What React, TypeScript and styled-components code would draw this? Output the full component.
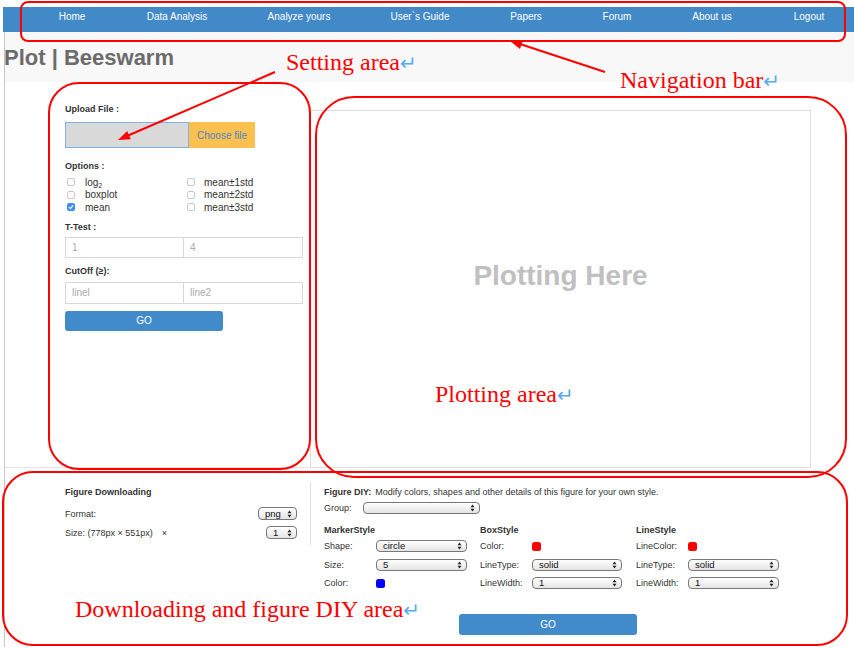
import React from "react";
import styled, { createGlobalStyle } from "styled-components";

const Global = createGlobalStyle`
  html, body { margin: 0; padding: 0; background: #fff; }
  body { font-family: "Liberation Sans", Arial, Helvetica, sans-serif; }
  * { box-sizing: border-box; }
`;

const Page = styled.div`
  position: relative;
  width: 854px;
  height: 647px;
  overflow: hidden;
  background: #fff;
  padding-top: 7px;
`;

const NavBar = styled.nav`
  display: flex;
  height: 25px;
  margin-left: 3px;
  padding-left: 17px;
  background: #4189c7;
`;

const NavItem = styled.a<{ $w: number }>`
  flex: none;
  width: ${(p) => p.$w}px;
  text-align: center;
  color: #fff;
  font-size: 10px;
  line-height: 20px;
  text-decoration: none;
`;

const Frame = styled.div`
  margin-left: 4px;
  border-left: 1px solid #c6c6c6;
  height: 615px;
`;

const Header = styled.header`
  height: 50px;
  background: #f8f8f8;
  padding-top: 13px;
`;

const Title = styled.h1`
  margin: 0 0 0 -1px;
  font-size: 22px;
  line-height: 26px;
  font-weight: bold;
  color: #6b6b6b;
`;

const Main = styled.div`
  display: flex;
  align-items: flex-start;
  height: 386px;
`;

const Settings = styled.section`
  width: 305px;
  height: 386px;
  padding: 21px 0 0 60px;
  border-bottom: 1px solid #e2e2e2;
`;

const FieldLabel = styled.div<{ $mt?: number }>`
  margin-top: ${(p) => p.$mt ?? 0}px;
  font-size: 9px;
  line-height: 12px;
  font-weight: bold;
  color: #333;
`;

const FileRow = styled.div`
  display: flex;
  height: 26px;
  margin-top: 7px;
`;

const FileField = styled.div`
  width: 124px;
  background: #d9d9d9;
  border: 1px solid #7fb3e6;
`;

const FileButton = styled.div`
  width: 66px;
  background: #fbc04f;
  color: #4b87c4;
  font-size: 10px;
  display: flex;
  align-items: center;
  justify-content: center;
`;

const CheckGrid = styled.div`
  display: grid;
  grid-template-columns: 119px 119px;
  grid-template-rows: repeat(3, 12.5px);
  grid-auto-flow: column;
  margin-top: 4px;
`;

const CheckItem = styled.label<{ $pl: number }>`
  display: flex;
  align-items: center;
  padding-left: ${(p) => p.$pl}px;
  font-size: 10px;
  color: #333;
`;

const Sub = styled.span`
  font-size: 7px;
  position: relative;
  top: 3px;
`;

const Box = styled.span<{ $on?: boolean; $gap: number }>`
  flex: none;
  width: 8px;
  height: 8px;
  margin-right: ${(p) => p.$gap}px;
  border-radius: 2px;
  border: 1px solid ${(p) => (p.$on ? "#3d8ff0" : "#c8c8c8")};
  background: ${(p) => (p.$on ? "#3d8ff0" : "#fff")};
  display: flex;
  align-items: center;
  justify-content: center;
`;

const InputRow = styled.div<{ $mt: number; $h: number }>`
  display: flex;
  margin-top: ${(p) => p.$mt}px;
  height: ${(p) => p.$h}px;
`;

const TextInput = styled.div<{ $second?: boolean }>`
  width: ${(p) => (p.$second ? 120 : 119)}px;
  margin-left: ${(p) => (p.$second ? -1 : 0)}px;
  border: 1px solid #d8d8d8;
  padding-left: 6px;
  display: flex;
  align-items: center;
  font-size: 10px;
  color: #aaa;
`;

const GoButton = styled.div<{ $w: number; $h: number; $mt: number; $ml?: number }>`
  width: ${(p) => p.$w}px;
  height: ${(p) => p.$h}px;
  margin-top: ${(p) => p.$mt}px;
  margin-left: ${(p) => p.$ml ?? 0}px;
  background: #428bca;
  border-radius: 3px;
  color: #fff;
  font-size: 10px;
  display: flex;
  align-items: center;
  justify-content: center;
`;

const PlotBox = styled.section`
  width: 501px;
  height: 358px;
  margin-top: 28px;
  border: 1px solid #dcdcdc;
  display: flex;
  justify-content: center;
  align-items: flex-start;
  padding-top: 149px;
`;

const PlotText = styled.div`
  font-size: 28px;
  line-height: 32px;
  font-weight: bold;
  color: #c0c0c0;
`;

const Bottom = styled.section`
  display: flex;
  align-items: flex-start;
`;

const Download = styled.div`
  width: 306px;
  height: 63px;
  margin-top: 14px;
  padding: 4px 13px 0 60px;
  border-right: 1px solid #e0e0e0;
`;

const Heading = styled.div`
  font-size: 9px;
  line-height: 12px;
  color: #333;
  b {
    font-weight: bold;
    margin-right: 4px;
  }
`;

const DlRow = styled.div<{ $mt: number }>`
  display: flex;
  justify-content: space-between;
  align-items: center;
  height: 13px;
  margin-top: ${(p) => p.$mt}px;
  font-size: 9px;
  color: #333;
`;

const Times = styled.span`
  margin-left: 9px;
`;

const DIY = styled.div`
  margin-top: 14px;
  padding: 4px 0 0 13px;
`;

const GroupRow = styled.div`
  display: flex;
  align-items: center;
  height: 12px;
  margin-top: 4px;
  font-size: 9px;
  color: #333;
`;

const GroupLabel = styled.span`
  width: 39px;
`;

const StyleGrid = styled.div`
  display: flex;
  margin-top: 10px;
`;

const StyleCol = styled.div`
  width: 156px;
`;

const ColTitle = styled.div`
  font-size: 9px;
  line-height: 13px;
  font-weight: bold;
  color: #333;
`;

const StyleRow = styled.div`
  display: grid;
  grid-template-columns: 52px 91px;
  align-items: center;
  height: 18.5px;
  font-size: 9px;
  color: #333;
`;

const Dot = styled.span<{ $c: string }>`
  width: 9px;
  height: 9px;
  border-radius: 2.5px;
  background: ${(p) => p.$c};
`;

const SelectBox = styled.div<{ $w: number; $h: number }>`
  width: ${(p) => p.$w}px;
  height: ${(p) => p.$h}px;
  border: 1px solid #777;
  border-radius: 4px;
  background: linear-gradient(#ffffff, #e4e4e4);
  display: flex;
  align-items: center;
  justify-content: space-between;
  padding: 0 4px 0 6px;
  font-size: 9.5px;
  line-height: 10px;
  color: #111;
`;

const Overlay = styled.svg`
  position: absolute;
  left: 0;
  top: 0;
  pointer-events: none;
`;

const Note = styled.span<{ $x: number; $y: number }>`
  position: absolute;
  left: ${(p) => p.$x}px;
  top: ${(p) => p.$y}px;
  font-family: "Liberation Serif", "Times New Roman", serif;
  font-size: 24px;
  line-height: 24px;
  color: #ff0000;
  white-space: nowrap;
`;

const Ret = styled.span`
  font-family: "DejaVu Sans", sans-serif;
  font-size: 20px;
  line-height: 20px;
  color: #58a8f2;
`;

const Arrows = () => (
  <svg width="5" height="8" viewBox="0 0 5 8">
    <path d="M0.5 3.2 L2.5 0.6 L4.5 3.2 Z M0.5 4.8 L2.5 7.4 L4.5 4.8 Z" fill="#222" />
  </svg>
);

const Select = ({ w, h = 12, v }: { w: number; h?: number; v: string }) => (
  <SelectBox $w={w} $h={h}>
    <span>{v}</span>
    <Arrows />
  </SelectBox>
);

const Check = ({ on, children, pl, gap }: { on?: boolean; children: React.ReactNode; pl: number; gap: number }) => (
  <CheckItem $pl={pl}>
    <Box $on={on} $gap={gap}>
      {on && (
        <svg width="6" height="6" viewBox="0 0 6 6">
          <path d="M1 3.2 L2.4 4.6 L5 1.4" stroke="#fff" strokeWidth="1.2" fill="none" />
        </svg>
      )}
    </Box>
    {children}
  </CheckItem>
);

const navItems: [string, number][] = [
  ["Home", 104],
  ["Data Analysis", 106],
  ["Analyze yours", 138],
  ["User`s Guide", 104],
  ["Papers", 108],
  ["Forum", 74],
  ["About us", 116],
  ["Logout", 78],
];

export default function App() {
  return (
    <>
      <Global />
      <Page>
        <NavBar>
          {navItems.map(([t, w]) => (
            <NavItem key={t} $w={w}>
              {t}
            </NavItem>
          ))}
        </NavBar>
        <Frame>
          <Header>
            <Title>Plot | Beeswarm</Title>
          </Header>
          <Main>
            <Settings>
              <FieldLabel>Upload File :</FieldLabel>
              <FileRow>
                <FileField />
                <FileButton>Choose file</FileButton>
              </FileRow>
              <FieldLabel $mt={12}>Options :</FieldLabel>
              <CheckGrid>
                <Check pl={2} gap={10}>
                  log<Sub>2</Sub>
                </Check>
                <Check pl={2} gap={10}>boxplot</Check>
                <Check pl={2} gap={10} on>
                  mean
                </Check>
                <Check pl={3} gap={9}>mean±1std</Check>
                <Check pl={3} gap={9}>mean±2std</Check>
                <Check pl={3} gap={9}>mean±3std</Check>
              </CheckGrid>
              <FieldLabel $mt={7}>T-Test :</FieldLabel>
              <InputRow $mt={4} $h={21}>
                <TextInput>1</TextInput>
                <TextInput $second>4</TextInput>
              </InputRow>
              <FieldLabel $mt={7}>CutOff (≥):</FieldLabel>
              <InputRow $mt={5} $h={22}>
                <TextInput>linel</TextInput>
                <TextInput $second>line2</TextInput>
              </InputRow>
              <GoButton $w={158} $h={20} $mt={7}>
                GO
              </GoButton>
            </Settings>
            <PlotBox>
              <PlotText>Plotting Here</PlotText>
            </PlotBox>
          </Main>
          <Bottom>
            <Download>
              <Heading>
                <b>Figure Downloading</b>
              </Heading>
              <DlRow $mt={9}>
                <span>Format:</span>
                <Select w={39} h={13} v="png" />
              </DlRow>
              <DlRow $mt={6}>
                <span>
                  Size: (778px × 551px)<Times>×</Times>
                </span>
                <Select w={31} h={13} v="1" />
              </DlRow>
            </Download>
            <DIY>
              <Heading>
                <b>Figure DIY:</b>Modify colors, shapes and other details of this figure for your own style.
              </Heading>
              <GroupRow>
                <GroupLabel>Group:</GroupLabel>
                <Select w={117} v="" />
              </GroupRow>
              <StyleGrid>
                <StyleCol>
                  <ColTitle>MarkerStyle</ColTitle>
                  <StyleRow>
                    <span>Shape:</span>
                    <Select w={91} v="circle" />
                  </StyleRow>
                  <StyleRow>
                    <span>Size:</span>
                    <Select w={91} v="5" />
                  </StyleRow>
                  <StyleRow>
                    <span>Color:</span>
                    <Dot $c="#0000ff" />
                  </StyleRow>
                </StyleCol>
                <StyleCol>
                  <ColTitle>BoxStyle</ColTitle>
                  <StyleRow>
                    <span>Color:</span>
                    <Dot $c="#ff0000" />
                  </StyleRow>
                  <StyleRow>
                    <span>LineType:</span>
                    <Select w={90} v="solid" />
                  </StyleRow>
                  <StyleRow>
                    <span>LineWidth:</span>
                    <Select w={90} v="1" />
                  </StyleRow>
                </StyleCol>
                <StyleCol>
                  <ColTitle>LineStyle</ColTitle>
                  <StyleRow>
                    <span>LineColor:</span>
                    <Dot $c="#ff0000" />
                  </StyleRow>
                  <StyleRow>
                    <span>LineType:</span>
                    <Select w={91} v="solid" />
                  </StyleRow>
                  <StyleRow>
                    <span>LineWidth:</span>
                    <Select w={91} v="1" />
                  </StyleRow>
                </StyleCol>
              </StyleGrid>
              <GoButton $w={178} $h={21} $mt={21} $ml={135}>
                GO
              </GoButton>
            </DIY>
          </Bottom>
        </Frame>

        <Overlay width="854" height="647" viewBox="0 0 854 647">
          <g fill="none" stroke="#ff0000" strokeWidth="2">
            <rect x="21" y="2" width="824" height="39" rx="7" />
            <rect x="49" y="83" width="261" height="386" rx="30" />
            <rect x="316" y="97" width="530" height="380" rx="38" />
            <rect x="3" y="472" width="844" height="173" rx="30" />
            <line x1="275" y1="72" x2="127" y2="136" />
            <line x1="605" y1="72" x2="520" y2="44" />
          </g>
          <g fill="#ff0000">
            <polygon points="118,140 130.8,139.3 127.2,131.1" />
            <polygon points="510,41 522.8,40.4 520,49" />
          </g>
        </Overlay>
        <Note $x={286} $y={50}>
          Setting area<Ret>↵</Ret>
        </Note>
        <Note $x={620} $y={68}>
          Navigation bar<Ret>↵</Ret>
        </Note>
        <Note $x={435} $y={382}>
          Plotting area<Ret>↵</Ret>
        </Note>
        <Note $x={75} $y={597}>
          Downloading and figure DIY area<Ret>↵</Ret>
        </Note>
      </Page>
    </>
  );
}
